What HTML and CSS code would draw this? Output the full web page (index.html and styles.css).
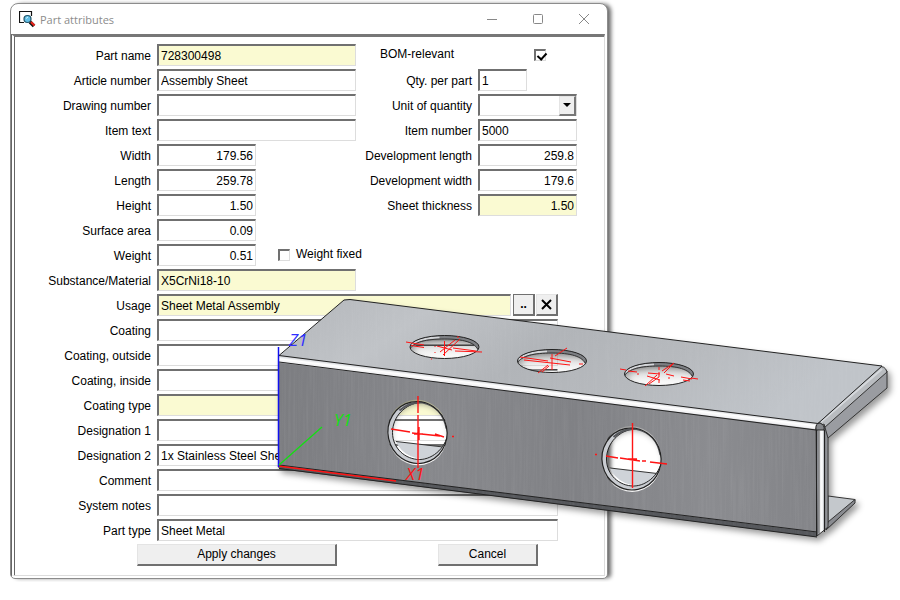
FILE: index.html
```html
<!DOCTYPE html>
<html lang="en">
<head>
<meta charset="utf-8">
<title>Part attributes</title>
<link rel="stylesheet" href="styles.css">
</head>
<body>
<main class="window">
  <header class="titlebar">
    <svg class="app-icon" width="17" height="17" viewBox="0 0 17 17" aria-hidden="true">
      <path d="M5 11.5H.5V.5H12.500V5" fill="none" stroke="#111" stroke-width="1.200"/>
      <circle cx="8.500" cy="8" r="3.500" fill="#62bfe6" stroke="#225468" stroke-width="1.200"/>
      <path d="M7 7.500l2-1.500" stroke="#d9f6ff"/>
      <path d="M11 11l4 4" stroke="#111" stroke-width="3.500"/>
      <path d="M12 11l3.500 3.500" stroke="#e8241c" stroke-width="2.200"/>
    </svg>
    <h1 class="title">Part attributes</h1>
    <div class="controls">
      <button type="button" class="control" aria-label="Minimize"><svg width="12" height="12" viewBox="0 0 12 12"><path d="M1 6.500h10"/></svg></button>
      <button type="button" class="control" aria-label="Maximize"><svg width="12" height="12" viewBox="0 0 12 12"><rect x="1.500" y="1.500" width="9" height="9" rx="1"/></svg></button>
      <button type="button" class="control" aria-label="Close"><svg width="12" height="12" viewBox="0 0 12 12"><path d="M1 1l10 10M11 1L1 11"/></svg></button>
    </div>
  </header>
  <form class="form">
    <div class="columns">
      <div class="column">
        <div class="row"><label for="name">Part name</label><input id="name" class="field medium required" value="728300498"></div>
        <div class="row"><label for="article">Article number</label><input id="article" class="field medium" value="Assembly Sheet"></div>
        <div class="row"><label for="drawing">Drawing number</label><input id="drawing" class="field medium"></div>
        <div class="row"><label for="item">Item text</label><input id="item" class="field medium"></div>
        <div class="row"><label for="width">Width</label><input id="width" class="field short number" value="179.56"></div>
        <div class="row"><label for="length">Length</label><input id="length" class="field short number" value="259.78"></div>
        <div class="row"><label for="height">Height</label><input id="height" class="field short number" value="1.50"></div>
        <div class="row"><label for="area">Surface area</label><input id="area" class="field short number" value="0.09"></div>
        <div class="row"><label for="weight">Weight</label><input id="weight" class="field short number" value="0.51"><span class="fixed"><input type="checkbox" id="fixed" class="check"><label for="fixed">Weight fixed</label></span></div>
        <div class="row"><label for="material">Substance/Material</label><input id="material" class="field medium required" value="X5CrNi18-10"></div>
      </div>
      <div class="column second">
        <div class="row bom"><label for="bom">BOM-relevant</label><input type="checkbox" id="bom" class="check" checked></div>
        <div class="row"><label for="qty">Qty. per part</label><input id="qty" class="field tiny" value="1"></div>
        <div class="row"><label for="unit">Unit of quantity</label><span class="drop"><select id="unit" class="field short"><option></option></select><span class="arrow"></span></span></div>
        <div class="row"><label for="number">Item number</label><input id="number" class="field short" value="5000"></div>
        <div class="row"><label for="devlength">Development length</label><input id="devlength" class="field short number" value="259.8"></div>
        <div class="row"><label for="devwidth">Development width</label><input id="devwidth" class="field short number" value="179.6"></div>
        <div class="row"><label for="thickness">Sheet thickness</label><input id="thickness" class="field short number required" value="1.50"></div>
      </div>
    </div>
    <div class="wide">
      <div class="row"><label for="usage">Usage</label><input id="usage" class="field long required" value="Sheet Metal Assembly"><button type="button" class="button square default" aria-label="Browse usage">..</button><button type="button" class="button square" aria-label="Clear usage"><svg width="11" height="11" viewBox="0 0 11 11"><path d="M1 1l9 9M10 1l-9 9" stroke="#000" stroke-width="2"/></svg></button></div>
      <div class="row"><label for="coating">Coating</label><input id="coating" class="field long"></div>
      <div class="row"><label for="outside">Coating, outside</label><input id="outside" class="field long"></div>
      <div class="row"><label for="inside">Coating, inside</label><input id="inside" class="field long"></div>
      <div class="row"><label for="type">Coating type</label><input id="type" class="field long required"></div>
      <div class="row"><label for="des1">Designation 1</label><input id="des1" class="field long"></div>
      <div class="row"><label for="des2">Designation 2</label><input id="des2" class="field long" value="1x Stainless Steel Sheet"></div>
      <div class="row"><label for="comment">Comment</label><input id="comment" class="field long"></div>
      <div class="row"><label for="notes">System notes</label><input id="notes" class="field long"></div>
      <div class="row"><label for="parttype">Part type</label><input id="parttype" class="field long" value="Sheet Metal"></div>
    </div>
    <div class="actions">
      <button type="button" class="button apply">Apply changes</button>
      <button type="button" class="button cancel">Cancel</button>
    </div>
  </form>
</main>

<svg class="part" width="630" height="270" viewBox="270 280 630 270" role="img" aria-label="Sheet metal part">
  <defs>
    <linearGradient id="top" x1="0" y1="0" x2="1" y2="0.300">
      <stop offset="0" stop-color="#b3b6ba"/><stop offset=".25" stop-color="#c0c3c7"/><stop offset=".5" stop-color="#b1b4b8"/><stop offset=".75" stop-color="#b7babe"/><stop offset="1" stop-color="#c0c4c9"/>
    </linearGradient>
    <linearGradient id="front" x1="0" y1="0" x2="1" y2="0">
      <stop offset="0" stop-color="#7c7d81"/><stop offset=".3" stop-color="#87888c"/><stop offset=".55" stop-color="#808185"/><stop offset=".8" stop-color="#8b8c90"/><stop offset="1" stop-color="#838488"/>
    </linearGradient>
    <linearGradient id="bend" gradientUnits="userSpaceOnUse" x1="500" y1="383" x2="499" y2="391">
      <stop offset="0" stop-color="#c8cbd0"/><stop offset=".4" stop-color="#fff"/><stop offset=".75" stop-color="#f1f1f3"/><stop offset="1" stop-color="#77797d"/>
    </linearGradient>
    <linearGradient id="side" x1="0" y1="0" x2="1" y2="0">
      <stop offset="0" stop-color="#696b70"/><stop offset=".25" stop-color="#a6a8ad"/><stop offset=".4" stop-color="#fff"/><stop offset=".6" stop-color="#eceef0"/><stop offset=".68" stop-color="#74767b"/><stop offset="1" stop-color="#a0a2a6"/>
    </linearGradient>
    <linearGradient id="haze" x1="0" y1="0" x2="0" y2="1">
      <stop offset="0" stop-color="#555" stop-opacity=".75"/><stop offset=".5" stop-color="#aaa" stop-opacity=".35"/><stop offset="1" stop-color="#fff" stop-opacity=".2"/>
    </linearGradient>
    <filter id="brushed" x="0" y="0" width="1" height="1">
      <feTurbulence type="fractalNoise" baseFrequency=".45 .015" numOctaves="2" seed="4"/>
      <feColorMatrix values="0 0 0 0 1  0 0 0 0 1  0 0 0 0 1  .9 0 0 0 -.35"/>
      <feComposite in2="SourceGraphic" operator="in"/>
    </filter>
    <ellipse id="round" rx="29.500" ry="31" transform="rotate(-12)"/>
    <clipPath id="roundclip"><use href="#round"/></clipPath>
    <clipPath id="innerclip"><ellipse cx="4" cy="-3" rx="28" ry="30" transform="rotate(-12)"/></clipPath>
    <clipPath id="flatclip"><ellipse rx="34.500" ry="11.500"/></clipPath>
    <g id="fronthole">
      <g clip-path="url(#roundclip)">
        <g clip-path="url(#innerclip)">
          <path d="M-30 8L30 15V40H-30z" fill="#cfd3d8"/>
          <path d="M-30 8L30 15" stroke="#333"/>
        </g>
        <path fill="#c9ccd1" fill-rule="evenodd" d="M-40-40H40V40H-40zM-25 0C-25 16-12 27 2 27S30 14 31-3S18-31 3-30S-25-16-25 0z"/>
        <path d="M-25 0C-25 16-12 27 2 27S30 14 31-3S18-31 3-30S-25-16-25 0z" fill="none" stroke="#222"/>
        <path d="M-18-22Q-8-31 5-30Q25-26 29-4" fill="none" stroke="#55575b" stroke-width="2"/>
      </g>
      <use href="#round" fill="none" stroke="#222" stroke-width="1.200"/>
    </g>
    <g id="tophole">
      <g clip-path="url(#flatclip)">
        <rect x="-35" y="-12" width="70" height="24" fill="url(#haze)"/>
        <path d="M-34.500 2C-31-5-18-8 0-8S31-5 34 4V-14H-36z" fill="#7d7f83"/>
        <path d="M-34-1C-28-7-18-9.500-5-9.500" stroke="#d4d6d9" stroke-width="2" fill="none"/>
        <path d="M-34.500 2C-31-5-18-8 0-8S31-5 34 4" fill="none" stroke="#333"/>
      </g>
      <ellipse rx="34.500" ry="11.500" fill="none" stroke="#222"/>
    </g>
    <path id="topshape" d="M279 356L344 300L350 299.500L882 366L817 424zM410 347a34.500 11.500 0 1 0 69 0a34.500 11.500 0 1 0-69 0zM517.500 361a34.500 11.500 0 1 0 69 0a34.500 11.500 0 1 0-69 0zM624.500 374a34.500 11.500 0 1 0 69 0a34.500 11.500 0 1 0-69 0z"/>
    <path id="frontshape" d="M278 361L817 429V536L278 468zM388 432.500a29.500 31 -12 1 0 59 0a29.500 31 -12 1 0-59 0zM602 459a29.500 31 -12 1 0 59 0a29.500 31 -12 1 0-59 0z"/>
  </defs>
  <g class="solid" fill-rule="evenodd" stroke-linejoin="round">
    <path d="M828 496L855 499.500L854 503L828 528z" fill="#c4c8cc" stroke="#333"/>
    <path d="M828 522L855 499.500V503L826 530z" fill="#898b90" stroke="#333"/>
    <path d="M817 424L876 370L887 371V388L828 438z" fill="#9a9ca1" stroke="#333"/>
    <path d="M817 424L878 367Q885 365 887 372L824 428z" fill="#b9bcc0" stroke="#333"/>
    <path d="M821 422L882 369" stroke="#d5d8dc" stroke-width="2"/>
    <use href="#topshape" fill="url(#top)"/>
    <use href="#frontshape" fill="url(#front)"/>
    <path d="M279 355.500L818 423.500V430L279 363z" fill="url(#bend)"/>
    <path d="M816 428L824 424L828 438V527L817 536z" fill="url(#side)" stroke="#333"/>
    <path d="M279 465L817 532.500V537L279 469z" fill="#55575b"/>
  </g>
  <use href="#frontshape" fill-rule="evenodd" filter="url(#brushed)" opacity=".12"/>
  <use href="#topshape" fill-rule="evenodd" filter="url(#brushed)" opacity=".08"/>
  <g fill="none" stroke="#222">
    <path d="M279 355.500L344 300L350 299.500L882 366M882 366L818 423.500L279 355.500M279 362L816 430M279 465L817 532M279 468.500L817 537M816.500 425V536M824.500 430V532"/>
    <path d="M816 430Q815 423 820 423Q825 425 824 430z" fill="#85878b"/>
    <path d="M819 430V533" stroke="#777"/>
  </g>
  <use href="#tophole" x="444.500" y="347"/>
  <use href="#tophole" x="552" y="361"/>
  <use href="#tophole" x="659" y="374"/>
  <path d="M416 345.500H474M545 369.500H557" stroke="#444"/>
  <use href="#fronthole" x="417.500" y="432.500"/>
  <use href="#fronthole" x="631.500" y="459"/>
  <g fill="none" stroke="#ff1414">
    <path d="M406 342L424 345M411 345.500L424 347.500M453 348L476 351M455 351L482 352M444.500 341V356M440 352L455 340M443 355L460 339M437 346L452 350M435 346v1M435 352v1M431 359h1M457 337h2"/>
    <path d="M520 357L548 361M524 360L570 365M550 358L571 362M552 354V370M555 356L567 348M538 373L548 365M542 372L549 366M579 364h4"/>
    <path d="M620 369L626 370M628 371L637 372M648 373L660 374M647 376L660 380M662 371L674 363M664 373L673 364M649 384L659 377M645 386L657 375M659 367V370M659 372V377M659 380V383M668 378h2M681 377L692 379M683 380L690 381M691 378L698 379M666 374L674 376M637 374h2"/>
    <path d="M418 396V413M418 415V468M414 434H423M391 429L410 432M412 433L440 436M435 434L444 437M452 436.500h2M419 427V440" stroke-width="1.400"/>
    <path d="M632.500 423V488M606 456L618 458M620 458L640 461M642 461h4M650 462L667 464M595 454.500h2M628 459H637" stroke-width="1.400"/>
    <path d="M278 466L396 481" stroke-width="1.500"/>
  </g>
  <path d="M278.500 347V467" stroke="#1010f0" stroke-width="1.500"/>
  <path d="M279 465L322 427" stroke="#12e012" stroke-width="1.300"/>
  <g class="axis">
    <text x="289" y="346" fill="#3030ff">Z1</text>
    <text x="334" y="426" fill="#12e012">Y1</text>
    <text x="406" y="480" fill="#ff1414">X1</text>
  </g>
</svg>
</body>
</html>
```

FILE: styles.css
```css
* { box-sizing: border-box; }

body {
  margin: 0;
  padding: 3px 10px;
  background: #fff;
  color: #000;
  font: 12px/15px "Liberation Sans", Arial, sans-serif;
}

.window {
  max-width: 598px;
  border: 1px solid #8c8c8c;
  border-radius: 8px 8px 5px 5px;
  background: #fff;
  box-shadow: 4px 0 4px -1px rgba(0, 0, 0, .6);
}

.titlebar {
  display: flex;
  align-items: center;
  gap: 4px;
  height: 30px;
  padding-left: 8px;
}

.title {
  flex: 1;
  margin: 0;
  color: #8c8c8c;
  font: 11px/15px "Open Sans", sans-serif;
}

.controls { display: flex; }

.control {
  display: grid;
  place-items: center;
  width: 46px;
  height: 28px;
  padding: 0;
  border: 0;
  background: none;
}

.control svg {
  fill: none;
  stroke: #888;
}

.form {
  margin: 0 2px 2px 0;
  padding: 5px 10px 9px 0;
  border: 1px solid #ddd;
  border-top: 3px groove #999;
  border-left: 4px groove #aaa;
  border-top: 3px solid #777;
  border-left: 4px double #666;
  background: #fff;
}

.columns {
  display: flex;
  align-items: flex-start;
}

.row {
  display: flex;
  align-items: center;
  height: 25px;
}

.row > label {
  flex: none;
  width: 136px;
  margin-right: 6px;
  padding-top: 3px;
  text-align: right;
  white-space: nowrap;
}

.column { width: 341px; }

.second { width: auto; }

.second .row > label { width: 116px; }

.second .bom > label {
  width: 178px;
  margin-right: 0;
  padding-left: 24px;
  padding-top: 0;
  text-align: left;
}

.field {
  height: 22px;
  padding: 1px 2px 0;
  border: 1px solid #ddd;
  border-top: 2px solid #707070;
  border-left: 2px solid #707070;
  border-radius: 0;
  background: #fff;
  color: #000;
  font: inherit;
}

.required { background: #fafad2; }
.number { text-align: right; }
.tiny { width: 49px; }
.short { width: 99px; }
.medium { width: 199px; }
.long { flex: 1; min-width: 0; }

.fixed {
  display: flex;
  align-items: center;
  gap: 6px;
  margin-left: 22px;
  white-space: nowrap;
}

.check {
  appearance: none;
  flex: none;
  width: 12px;
  height: 12px;
  margin: 0;
  border: 1px solid #ddd;
  border-top: 2px solid #707070;
  border-left: 2px solid #707070;
  background: #fff;
}

.check:checked::after {
  content: "";
  display: block;
  width: 4px;
  height: 7px;
  margin: 0 0 0 3px;
  border: solid #000;
  border-width: 0 2px 2px 0;
  transform: rotate(42deg);
}

.drop {
  position: relative;
  display: flex;
}

.drop select { appearance: none; }

.arrow {
  position: absolute;
  top: 2px;
  right: 1px;
  bottom: 0;
  display: grid;
  place-items: center;
  width: 17px;
  border: 1px solid #e4e4e4;
  border-right: 2px solid #777;
  border-bottom: 2px solid #777;
  background: #efefef;
  pointer-events: none;
}

.arrow::after {
  content: "";
  border: 4px solid transparent;
  border-top-color: #000;
  border-bottom: 0;
}

.wide { padding-right: 36px; }

.button {
  height: 22px;
  padding: 0;
  border: 1px solid #e4e4e4;
  border-right: 2px solid #707070;
  border-bottom: 2px solid #707070;
  background: #efefef;
  color: #000;
  font: inherit;
}

.square {
  flex: none;
  width: 22px;
  margin-left: 1px;
  font-weight: bold;
}

.square svg { display: block; margin: auto; }

.default {
  margin-left: 2px;
  border-top-color: #707070;
  border-left-color: #707070;
}

.actions {
  display: flex;
  justify-content: space-between;
  margin-top: 2px;
  padding: 0 56px 0 122px;
}

.apply { width: 200px; }
.cancel { width: 100px; }

.part {
  position: absolute;
  top: 280px;
  left: 270px;
  pointer-events: none;
}

.solid { filter: drop-shadow(3px 4px 3px rgba(0, 0, 0, .4)); }

.axis {
  font: italic 17px "Open Sans", sans-serif;
}
```
